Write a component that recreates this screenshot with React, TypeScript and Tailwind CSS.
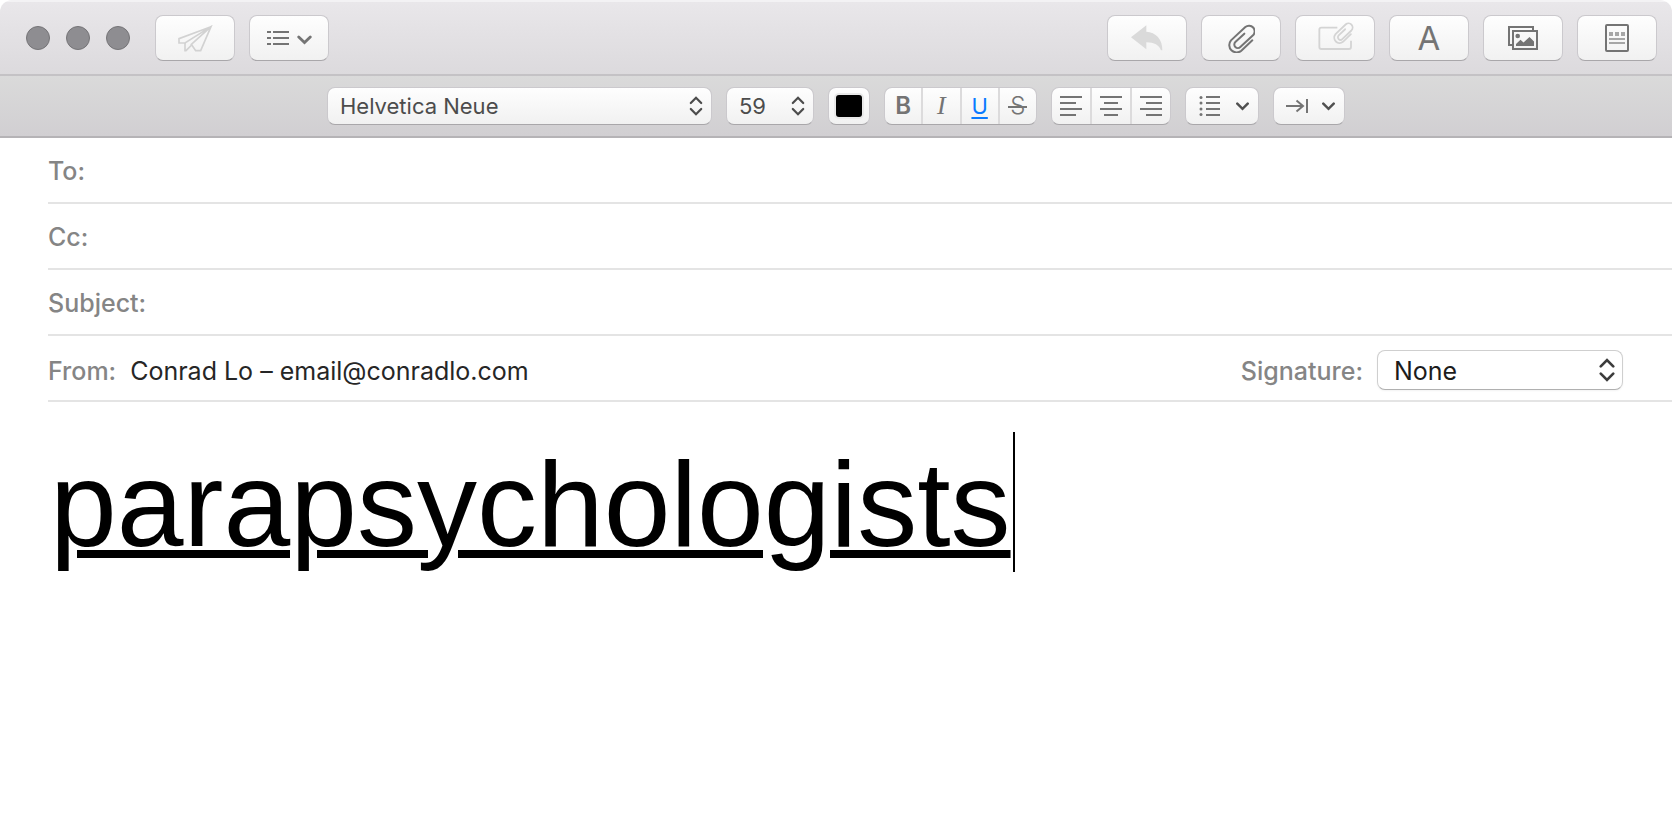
import React from "react";

const surface =
  "border border-[#cbc9cd] border-b-[#a9a7aa] bg-linear-to-b from-[#fefefe] to-[#f1f1f1] rounded-lg";
const bigBtn = `${surface} flex h-[46px] w-20 items-center justify-center text-[#747474]`;
const smallBtn = `${surface} flex h-[38px] items-center text-[#747474]`;
const toolSelect = `${surface} block h-[38px] appearance-none pl-3 text-[22px] leading-7 text-[#4c4c4c]`;
const segment = "flex h-full flex-1 items-center justify-center";

const CLIP = "M76 52 L43 83 A22 22 0 0 1 12 52 L55 12 A17 17 0 0 1 78 37 L40 72 A10.500 10.500 0 0 1 25 57 L52 32";

function Plane() {
  return (
    <svg width="35" height="27" viewBox="0 0 105 81" fill="none" stroke="#d2d2d2" strokeWidth="5" strokeLinejoin="miter" aria-hidden="true">
      <path d="M99 5 L3 41 V54 H21 L99 5 L68 77 H53 L40 58 L99 5" />
      <path d="M21 54 V77 H24 L41 60" />
    </svg>
  );
}

function Chevron({ className = "h-[9px] w-[13px]" }: { className?: string }) {
  return (
    <svg className={className} viewBox="0 0 13 9" fill="none" stroke="currentColor" strokeWidth="2.500" strokeLinecap="round" strokeLinejoin="miter" aria-hidden="true">
      <path d="M1.300 1.700 L6.500 6.800 L11.700 1.700" />
    </svg>
  );
}

function UpDown({ className }: { className: string }) {
  return (
    <svg className={`pointer-events-none absolute top-1/2 -translate-y-1/2 ${className}`} viewBox="0 0 13 20" fill="none" stroke="currentColor" strokeWidth="2.200" strokeLinecap="round" aria-hidden="true">
      <path d="M1.300 7 L6.500 1.700 L11.700 7 M1.300 13 L6.500 18.300 L11.700 13" />
    </svg>
  );
}

function Lines({ rows }: { rows: [number, number][] }) {
  return (
    <svg width="22" height="20" viewBox="0 0 22 20" fill="currentColor" shapeRendering="crispEdges" aria-hidden="true">
      {rows.map(([x, w], i) => (
        <rect key={i} x={x} y={i * 6} width={w} height="2" />
      ))}
    </svg>
  );
}

function Field({ id, label }: { id: string; label: string }) {
  return (
    <div className="flex h-[66px] items-center border-b-2 border-[#e4e4e4] pt-[2px] pr-12">
      <label htmlFor={id} className="font-medium text-[#858585]">{label}</label>
      <input id={id} type="text" className="ml-3 min-w-0 flex-1 bg-transparent text-[#262626] outline-none" />
    </div>
  );
}

export default function App() {
  return (
    <div className="min-h-screen bg-white font-['Inter','Liberation_Sans',sans-serif] text-[25px] leading-8">
      <header className="overflow-hidden rounded-t-xl">
        <div className="flex h-[76px] items-center justify-between border-t-2 border-b-2 border-t-[#f3f2f4] border-b-[#c4c2c5] bg-linear-to-b from-[#e9e7ea] to-[#dcdadd] pr-[15px] pl-[26px]">
          <div className="flex items-center">
            <div className="mr-[25px] flex gap-4">
              <button aria-label="Close" className="size-6 rounded-full border border-[#757477] bg-[#8e8d91]" />
              <button aria-label="Minimize" className="size-6 rounded-full border border-[#757477] bg-[#8e8d91]" />
              <button aria-label="Zoom" className="size-6 rounded-full border border-[#757477] bg-[#8e8d91]" />
            </div>
            <div className="flex gap-[14px]">
              <button aria-label="Send" className={bigBtn}><Plane /></button>
              <button aria-label="Header fields" className={`${bigBtn} gap-2`}>
                <svg width="22" height="14" viewBox="0 0 22 14" fill="currentColor" shapeRendering="crispEdges" aria-hidden="true">
                  <path d="M0 0h4v2H0z M6 0h16v2H6z M0 6h4v2H0z M6 6h16v2H6z M0 12h4v2H0z M6 12h16v2H6z" />
                </svg>
                <span className="pt-[3px]"><Chevron className="h-[10px] w-[15px]" /></span>
              </button>
            </div>
          </div>
          <div className="flex gap-[14px]">
            <button aria-label="Reply" className={bigBtn}>
              <svg width="32" height="26" viewBox="0 0 96 78" fill="#dadada" aria-hidden="true">
                <path d="M0 37 L46 1 V20 C74 22 95 42 94 76 H90 C84 60 70 52 46 52 V73 Z" />
              </svg>
            </button>
            <button aria-label="Attach" className={bigBtn}>
              <svg width="28" height="30" viewBox="0 0 84 90" fill="none" stroke="currentColor" strokeWidth="6" strokeLinecap="round" aria-hidden="true">
                <path d={CLIP} />
              </svg>
            </button>
            <button aria-label="Include attachments" className={bigBtn}>
              <svg className="overflow-visible" width="36" height="30" viewBox="0 0 108 90" fill="none" stroke="#d4d4d4" strokeWidth="5.500" aria-hidden="true">
                <path d="M61 14 H13 Q7 14 7 20 V72 Q7 78 13 78 H96 Q102 78 102 72 V53" />
                <path d={CLIP} transform="translate(47 -5) scale(.72 .74)" strokeWidth="7.500" strokeLinecap="round" />
              </svg>
            </button>
            <button aria-label="Format" className={`${bigBtn} text-[33px]`}>A</button>
            <button aria-label="Photo browser" className={bigBtn}>
              <svg width="30" height="24" viewBox="0 0 30 24" fill="none" stroke="currentColor" strokeWidth="2" aria-hidden="true">
                <path d="M4 19 H1 V1 H25 V4" />
                <rect x="5" y="5" width="24" height="18" />
                <circle cx="9.700" cy="10" r="2.300" fill="currentColor" stroke="none" />
                <path d="M8 20 V18 L12.500 13.700 L15.500 16.500 L21.500 11 L26 15.500 V20 Z" fill="currentColor" stroke="none" />
              </svg>
            </button>
            <button aria-label="Stationery" className={bigBtn}>
              <svg width="24" height="28" viewBox="0 0 24 28" fill="none" aria-hidden="true">
                <rect x="1" y="1" width="22" height="26" rx="1" stroke="currentColor" strokeWidth="2" />
                <path fill="#a6a6a6" d="M4 8h4v4H4z M10 8h4v4h-4z M16 8h4v4h-4z M4 14h16v2H4z M4 18h16v2H4z" />
              </svg>
            </button>
          </div>
        </div>

        <div className="flex h-[62px] items-center justify-center gap-[14px] border-b-2 border-[#b5b3b6] bg-linear-to-b from-[#dadada] to-[#d1cfd2]">
          <div className="relative text-[#4c4c4c]">
            <select aria-label="Font" className={`${toolSelect} w-[385px]`}>
              <option>Helvetica Neue</option>
            </select>
            <UpDown className="right-[9px] h-5 w-[14px]" />
          </div>
          <div className="relative text-[#4c4c4c]">
            <select aria-label="Font size" className={`${toolSelect} w-[88px]`}>
              <option>59</option>
            </select>
            <UpDown className="right-[9px] h-5 w-[14px]" />
          </div>
          <button aria-label="Text color" className={`${smallBtn} w-[42px] justify-center`}>
            <span className="h-[22px] w-[26px] rounded-[3px] bg-black ring-2 ring-[#e9e9e9]" />
          </button>
          <div className={`${smallBtn} w-[153px] divide-x-2 divide-[#dcdbdc]`}>
            <button aria-label="Bold" className={`${segment} text-2xl leading-8 font-semibold`}>B</button>
            <button aria-label="Italic" className={`${segment} font-['Liberation_Serif',serif] text-[26px] leading-8 italic`}>I</button>
            <button aria-label="Underline" className={`${segment} text-[22px] text-[#0a7aff] underline decoration-2 underline-offset-[3px]`}>U</button>
            <button aria-label="Strikethrough" className={`${segment} text-2xl font-light`}>
              <span className="relative px-[2px] before:absolute before:inset-x-0 before:top-1/2 before:h-[2px] before:bg-[#747474]">S</span>
            </button>
          </div>
          <div className={`${smallBtn} w-[120px] divide-x-2 divide-[#dcdbdc]`}>
            <button aria-label="Align left" className={segment}><Lines rows={[[0, 22], [0, 16], [0, 22], [0, 16]]} /></button>
            <button aria-label="Align center" className={segment}><Lines rows={[[0, 22], [4, 14], [0, 22], [4, 14]]} /></button>
            <button aria-label="Align right" className={segment}><Lines rows={[[0, 22], [6, 16], [0, 22], [6, 16]]} /></button>
          </div>
          <button aria-label="Lists" className={`${smallBtn} w-[74px] justify-between pr-[9px] pl-[13px]`}>
            <svg width="22" height="20" viewBox="0 0 22 20" fill="currentColor" aria-hidden="true">
              <path d="M7 0h14v2H7z M7 6h14v2H7z M7 12h14v2H7z M7 18h14v2H7z" />
              <circle cx="2" cy="1.500" r="1.500" />
              <circle cx="2" cy="7" r="1.500" />
              <circle cx="2" cy="13" r="1.500" />
              <circle cx="2" cy="18.500" r="1.500" />
            </svg>
            <span className="text-[#505050]"><Chevron /></span>
          </button>
          <button aria-label="Indentation" className={`${smallBtn} w-[72px] justify-between pr-[9px] pl-[12px]`}>
            <svg width="22" height="14" viewBox="0 0 22 14" fill="none" stroke="currentColor" strokeWidth="2" aria-hidden="true">
              <path d="M0 7 H17 M10.500 1.500 L17 7 L10.500 12.500 M21 0 V14" />
            </svg>
            <span className="text-[#505050]"><Chevron /></span>
          </button>
        </div>
      </header>

      <main>
        <form className="pl-12">
          <Field id="to" label="To:" />
          <Field id="cc" label="Cc:" />
          <Field id="subject" label="Subject:" />
          <div className="flex h-[66px] items-center border-b-2 border-[#e4e4e4] pt-1 pr-[49px]">
            <label htmlFor="from" className="pt-[2px] font-medium text-[#858585]">From:</label>
            <select id="from" className="ml-[14px] appearance-none bg-transparent pt-[2px] text-[#262626]">
              <option>Conrad Lo – email@conradlo.com</option>
            </select>
            <label htmlFor="signature" className="mr-[14px] ml-auto pt-[2px] font-medium text-[#858585]">Signature:</label>
            <div className="relative text-[#3c3c3c]">
              <select id="signature" className="block h-10 w-[246px] appearance-none rounded-lg border border-[#cfcfcf] border-b-[#b0b0b0] bg-white pt-[2px] pl-4 text-[#1c1c1c] shadow-xs">
                <option>None</option>
              </select>
              <UpDown className="right-2 h-6 w-4" />
            </div>
          </div>
        </form>
        <div className="flex items-start pt-[30px] pr-12 pl-[50px]">
          <div role="textbox" aria-label="Message" contentEditable suppressContentEditableWarning spellCheck={false} className="font-['Liberation_Sans',sans-serif] text-[120px] leading-[144px] text-black underline decoration-[8px] underline-offset-[4px] outline-none">
            parapsychologists
          </div>
          <span className="ml-[2px] h-[140px] w-[2px] bg-black" />
        </div>
      </main>
    </div>
  );
}
